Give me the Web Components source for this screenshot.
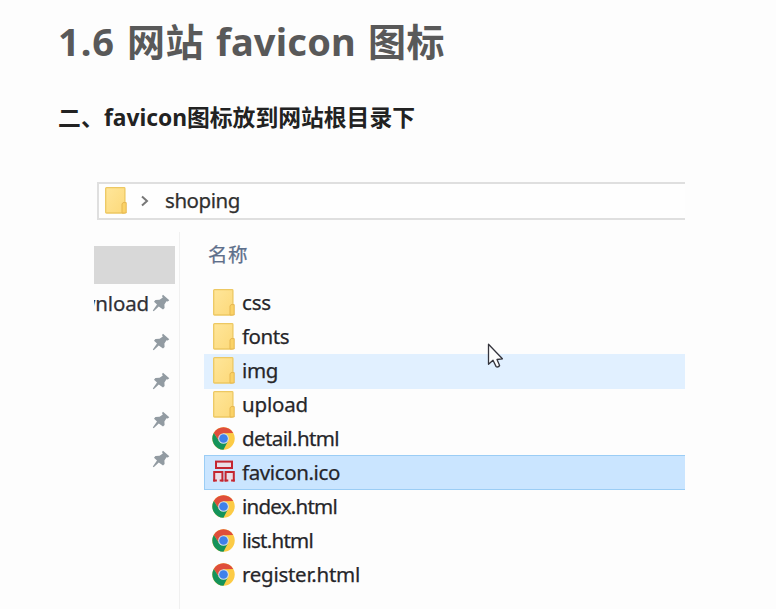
<!DOCTYPE html>
<html lang="zh-CN">
<head>
<meta charset="utf-8">
<title>1.6 网站 favicon 图标</title>
<style>
body{margin:0;background:#fdfdfd;width:776px;height:609px;overflow:hidden}
</style>
</head>
<body>
<course-slide></course-slide>
<script>
const define=(name,html,init)=>customElements.define(name,class extends HTMLElement{
  constructor(){super();this.attachShadow({mode:'open'}).innerHTML=html;}
  connectedCallback(){if(init)init.call(this,this.shadowRoot);}
});

/* One line of text whose tracking is adjusted to a given width. */
define('fit-text','<style>:host{display:block;white-space:nowrap;flex:none}span{display:inline-block}</style><span><slot></slot></span>',function(root){
  const s=root.querySelector('span'),w=+this.getAttribute('w');
  const n=s.getBoundingClientRect().width;
  s.style.letterSpacing=(w-n)/this.textContent.length+'px';
});

define('folder-icon',`<style>:host{display:block;flex:none;width:22px;height:27px}svg{display:block}</style>
<svg width="22" height="27" viewBox="0 0 22 27"><defs><linearGradient id="g" x1="0" y1="0" x2="1" y2="1"><stop offset="0" stop-color="#ffe69a"/><stop offset="1" stop-color="#fcd97a"/></linearGradient></defs>
<rect x=".7" y=".7" width="19.2" height="25.3" rx=".8" fill="url(#g)" stroke="#edc862" stroke-width="1.3"/><path d="M17 26V17L18 15.6H21.2V26Z" fill="#fbd266" stroke="#e6b750" stroke-width="1"/></svg>`);

define('chrome-icon',`<style>:host{display:block;flex:none;width:23px;height:23px}svg{display:block}</style>
<svg width="23" height="23" viewBox="0 0 24 24"><circle cx="12" cy="12" r="11.7" fill="#fccb45"/>
<path d="M1.87 6.15A11.7 11.7 0 0 1 22.13 6.15L12 6.6L7.3 14.7Z" fill="#df4e3b"/>
<path d="M1.87 6.15A11.7 11.7 0 0 0 12 23.7L16.7 14.7L7.3 14.7Z" fill="#14935a"/>
<circle cx="12" cy="12" r="5.6" fill="#d5dfe8"/><circle cx="12" cy="12" r="4.5" fill="#3f80ea"/></svg>`);

define('site-icon',`<style>:host{display:block;flex:none;width:22px;height:22px}svg{display:block}</style>
<svg width="22" height="22" viewBox="0 0 22 22"><g fill="#eadde6" stroke="#c42530" stroke-width="2"><rect x="3" y="1.6" width="16" height="6.4"/><path d="M1.2 21.5V12H9.4V21.5M12.6 21.5V12H20.8V21.5"/></g>
<path d="M.2 20.4H3.9M6.7 20.4H10.4M11.6 20.4H15.3M18.1 20.4H21.8" stroke="#c42530" stroke-width="2"/></svg>`);

define('pin-icon',`<style>:host{display:block;flex:none;width:18px;height:18px}svg{display:block}</style>
<svg width="18" height="18" viewBox="0 0 18 18"><path d="M11 .8L17.3 6.3L15.8 7.5L14.5 7.2L12.4 10.5L12.6 14L11 15.4L6.8 12.4L1.7 17.2L.8 16.4L5 10.6L2 7.8L3.4 6L7.6 5.8L10.8 3.5L10 2Z" fill="#929ba2"/></svg>`);

define('address-bar',`<style>:host{display:flex;align-items:center;box-sizing:border-box;margin-left:3px;width:588px;height:38px;border:2px solid #dfdfdf;border-right:0;padding-left:6px;background:#fefefe;font-size:20.5px;line-height:28px;color:#303030}
svg{margin:0 15px 0 13px;flex:none}folder-icon{margin-top:-1px}fit-text{margin-top:-3px}</style>
<folder-icon></folder-icon><svg width="10" height="12" viewBox="0 0 10 12"><path d="M2 1.5L7 6L2 10.5" fill="none" stroke="#777" stroke-width="2"/></svg><fit-text w="75">shoping</fit-text>`);

define('quick-access',`<style>:host{display:block;width:86px;box-sizing:border-box;border-right:1px solid #f0f0f0;padding-top:14px;font-size:20.5px;color:#303036}
.sel{width:80.5px;height:38px;background:#d8d8d8}
.row{display:flex;align-items:center;justify-content:flex-end;width:76px;height:38.8px}
.clip{width:55px;overflow:hidden;display:flex;justify-content:flex-end;margin-right:3px;line-height:28px}</style>
<div class="sel"></div><div class="row"><div class="clip"><fit-text w="94">download</fit-text></div><pin-icon></pin-icon></div>
<div class="row"><pin-icon></pin-icon></div><div class="row"><pin-icon></pin-icon></div><div class="row"><pin-icon></pin-icon></div><div class="row"><pin-icon></pin-icon></div>`);

define('file-row',`<style>:host{display:flex;align-items:center;box-sizing:border-box;height:33.9px;padding-left:8.5px;font-size:20.5px;line-height:28px;color:#26262a}
:host([hover]){background:#e1f0ff;box-shadow:0 1px #e1f0ff}:host([selected]){background:#cae5ff;box-shadow:inset 1px 1px #9bcdf5,0 1px #9bcdf5}
.i{width:29.5px;display:flex;flex:none}chrome-icon{margin-left:-1px}site-icon{margin-top:-3px}fit-text{margin-top:-1px}</style><span class="i"></span><fit-text></fit-text>`,function(root){
  root.querySelector('.i').append(document.createElement(this.getAttribute('icon')+'-icon'));
  const t=document.createElement('fit-text');t.textContent=this.getAttribute('name');t.setAttribute('w',this.getAttribute('w'));
  root.querySelector('fit-text').replaceWith(t);
});

define('file-list',`<style>:host{display:block;flex:1;padding-left:24px;box-sizing:border-box}
.h{display:flex;height:54px;box-sizing:border-box;padding:9px 0 0 4px;font-size:19.5px;line-height:28px;color:#5d6f8b}</style>
<div class="h"><fit-text w="40">名称</fit-text></div><slot></slot>`);

define('mouse-pointer',`<style>:host{position:absolute;left:487px;top:343px;width:17px;height:27px}</style>
<svg width="17" height="27" viewBox="0 0 17 27"><path d="M1.5 1.2V21.3L6 17.2L9 23.4Q10.8 25 12.6 22.5L10 16.5L15.4 15.8Z" fill="#fdfdfd" stroke="#34343c" stroke-width="1.3" stroke-linejoin="round"/></svg>`);

define('course-slide',`<style>
:host{display:block;box-sizing:border-box;width:776px;height:609px;padding:16px 0 0 58px;overflow:hidden;font-family:"Noto Sans","Noto Sans CJK SC",sans-serif}
h1,h2{display:flex;margin:0;font-weight:700}
h1{column-gap:12px;padding-top:1px;font-size:38px;line-height:48px;height:48px;color:#595959}
h2{margin-top:37px;font-size:22.8px;line-height:32px;height:32px;color:#222}
.win{margin:48px 0 0 36px;width:591px;-webkit-text-stroke:.25px currentColor}.body{display:flex;height:377px;margin-top:12px}
</style>
<h1><fit-text w="57">1.6</fit-text><fit-text w="77">网站</fit-text><fit-text w="140">favicon</fit-text><fit-text w="77">图标</fit-text></h1>
<h2><fit-text w="46">二、</fit-text><fit-text w="83">favicon</fit-text><fit-text w="228">图标放到网站根目录下</fit-text></h2>
<div class="win"><address-bar></address-bar><div class="body"><quick-access></quick-access><file-list>
<file-row icon="folder" name="css" w="29"></file-row><file-row icon="folder" name="fonts" w="47"></file-row>
<file-row icon="folder" name="img" w="36" hover></file-row><file-row icon="folder" name="upload" w="66"></file-row>
<file-row icon="chrome" name="detail.html" w="97"></file-row><file-row icon="site" name="favicon.ico" w="98" selected></file-row>
<file-row icon="chrome" name="index.html" w="95"></file-row><file-row icon="chrome" name="list.html" w="71"></file-row>
<file-row icon="chrome" name="register.html" w="118"></file-row></file-list></div></div><mouse-pointer></mouse-pointer>`);
</script>
</body>
</html>
